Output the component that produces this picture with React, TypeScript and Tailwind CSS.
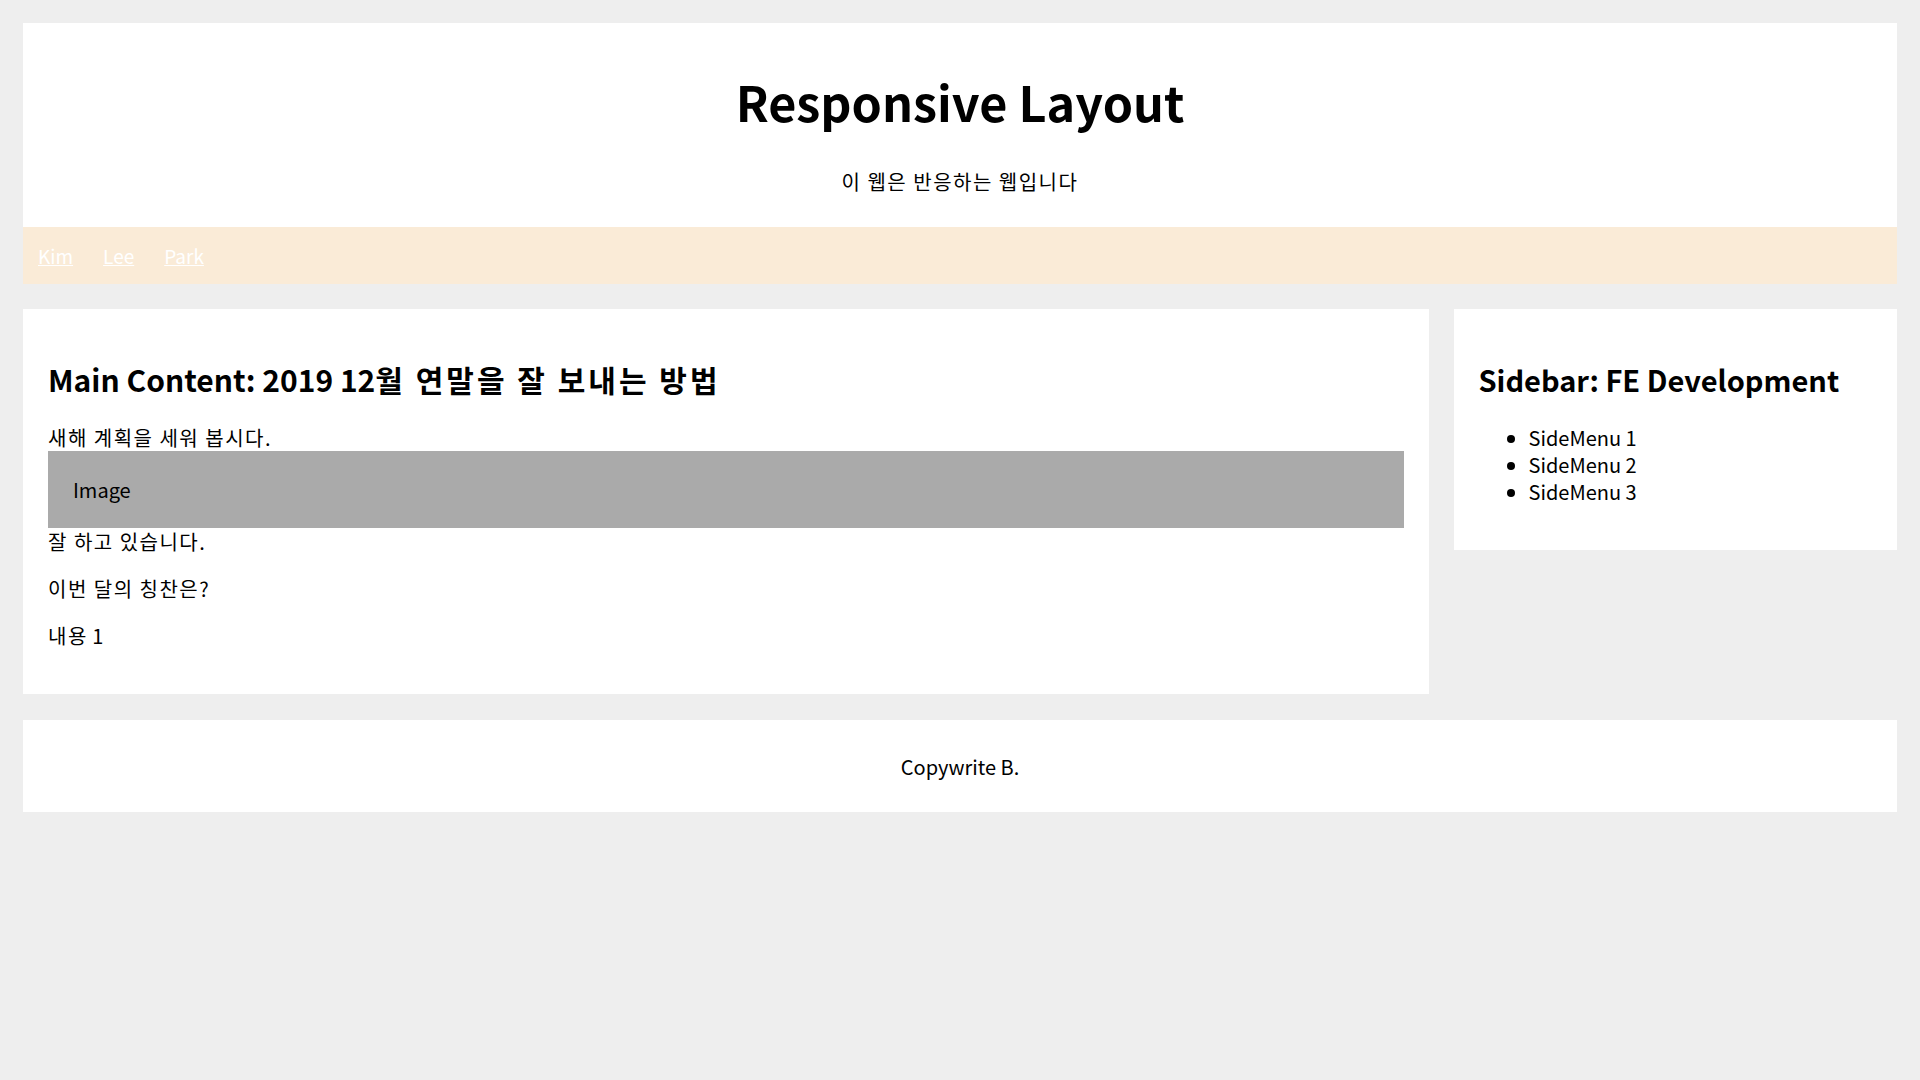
import React from 'react'

const navLinks = ['Kim', 'Lee', 'Park']
const sideMenus = ['SideMenu 1', 'SideMenu 2', 'SideMenu 3']

// Korean runs sit a little wider in the reference font
function Ko({ children, wide }: { children: React.ReactNode; wide?: boolean }) {
  return <span className={wide ? 'tracking-[0.1em]' : 'tracking-[0.075em]'}>{children}</span>
}

export default function App() {
  return (
    <div className="min-h-screen bg-[#eeeeee] p-[23px] font-['Noto_Sans_CJK_KR','Noto_Sans',sans-serif] text-[20px] leading-[27px] text-black">
      {/* Header */}
      <header className="bg-white py-[12.5px] text-center">
        <h1 className="mt-[32px] mb-[34px] text-[48.5px] font-bold leading-[66px]">Responsive Layout</h1>
        <p className="my-[20px]">
          <Ko>이 웹은 반응하는 웹입니다</Ko>
        </p>
      </header>

      {/* Nav */}
      <nav className="flex bg-[#faebd7] py-[15px]">
        {navLinks.map((name) => (
          <a key={name} href="#" className="px-[15px] text-[19px] text-white underline">
            {name}
          </a>
        ))}
      </nav>

      <div className="mt-[25px] flex items-start gap-[25px]">
        {/* Main content */}
        <main className="w-3/4 bg-white p-[25px]">
          <h2 className="my-[25px] text-[30px] font-bold leading-[40px]">
            Main Content: 2019 12<Ko wide>월 연말을 잘 보내는 방법</Ko>
          </h2>
          <div>
            <Ko>새해 계획을 세워 봅시다.</Ko>
          </div>
          <div className="bg-[#aaaaaa] p-[25px]">Image</div>
          <div>
            <Ko>잘 하고 있습니다.</Ko>
          </div>
          <p className="my-[20px]">
            <Ko>이번 달의 칭찬은?</Ko>
          </p>
          <p className="my-[20px]">
            <Ko>내용</Ko> 1
          </p>
        </main>

        {/* Sidebar */}
        <aside className="flex-1 bg-white p-[25px]">
          <h2 className="my-[25px] text-[29px] font-bold leading-[40px]">Sidebar: FE Development</h2>
          <ul className="my-[20px] list-disc pl-[50px]">
            {sideMenus.map((item) => (
              <li key={item}>{item}</li>
            ))}
          </ul>
        </aside>
      </div>

      {/* Footer */}
      <footer className="mt-[26px] bg-white py-[12.5px] text-center">
        <p className="my-[20px]">Copywrite B.</p>
      </footer>
    </div>
  )
}
